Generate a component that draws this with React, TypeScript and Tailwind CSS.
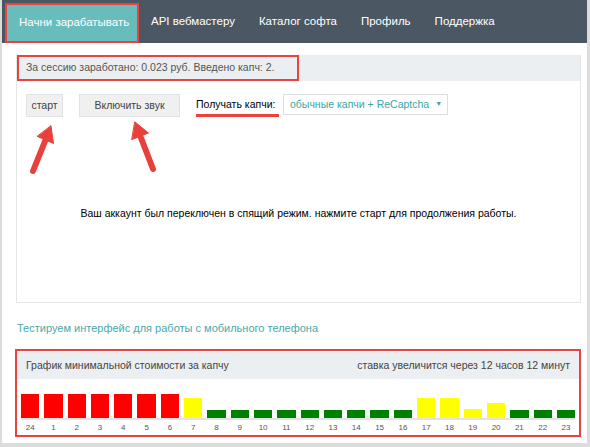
import React from 'react';

const tabs = ['API вебмастеру', 'Каталог софта', 'Профиль', 'Поддержка'];

// hour label, bar colour, bar height
const bars: { h: string; c: string; v: number }[] = [
  { h: '24', c: 'red', v: 24 },
  { h: '1', c: 'red', v: 24 },
  { h: '2', c: 'red', v: 24 },
  { h: '3', c: 'red', v: 24 },
  { h: '4', c: 'red', v: 24 },
  { h: '5', c: 'red', v: 24 },
  { h: '6', c: 'red', v: 24 },
  { h: '7', c: 'yellow', v: 20 },
  { h: '8', c: 'green', v: 8 },
  { h: '9', c: 'green', v: 8 },
  { h: '10', c: 'green', v: 8 },
  { h: '11', c: 'green', v: 8 },
  { h: '12', c: 'green', v: 8 },
  { h: '13', c: 'green', v: 8 },
  { h: '14', c: 'green', v: 8 },
  { h: '15', c: 'green', v: 8 },
  { h: '16', c: 'green', v: 8 },
  { h: '17', c: 'yellow', v: 20 },
  { h: '18', c: 'yellow', v: 20 },
  { h: '19', c: 'yellow', v: 9 },
  { h: '20', c: 'yellow', v: 15 },
  { h: '21', c: 'green', v: 8 },
  { h: '22', c: 'green', v: 8 },
  { h: '23', c: 'green', v: 8 },
];

const barColor: Record<string, string> = {
  red: 'bg-[#ff0000]',
  yellow: 'bg-[#ffff00]',
  green: 'bg-[#008000]',
};

function Arrows() {
  return (
    <svg className="absolute left-0 top-0 pointer-events-none" width="590" height="447" viewBox="0 0 590 447">
      <g stroke="#e8413c" strokeWidth="6" strokeLinecap="round" fill="#e8413c">
        <line x1="31" y1="171" x2="43.5" y2="140" />
        <polygon points="49,126 51.5,143.5 35.5,136.5" strokeWidth="1" strokeLinejoin="round" />
        <line x1="151" y1="169" x2="138.3" y2="136" />
        <polygon points="133,122 146.5,133 130,139.5" strokeWidth="1" strokeLinejoin="round" />
      </g>
    </svg>
  );
}

export default function App() {
  return (
    <div
      className="relative w-[590px] h-[447px] overflow-hidden bg-white border-l-2 border-r-[3px] border-b-4 border-[#dcdcdc] text-[10.5px] whitespace-nowrap"
      style={{ fontFamily: '"Liberation Sans", Arial, sans-serif' }}
    >
      {/* Nav */}
      <div className="h-[43px] bg-[#4b5863] flex items-stretch pl-[3px]">
        <div className="mt-[3px] w-[134px] bg-[#68bcbc] border-2 border-[#e8433f] flex items-center pl-[12px] text-white text-[11.5px]">
          Начни зарабатывать
        </div>
        <div className="flex items-center gap-[24px] pl-[12px] text-white text-[11.5px]">
          {tabs.map((t) => (
            <span key={t}>{t}</span>
          ))}
        </div>
      </div>

      <div className="pl-[14px] pr-[4px]">
        {/* Main box */}
        <div className="mt-[12px] w-[565px] h-[248px] border border-[#e6e6e6] border-t-0 flex flex-col">
          <div className="h-[26px] bg-[#eceff1] flex items-center">
            <div className="h-[26px] w-[282px] border-2 border-[#e8433f] flex items-center pl-[7px] text-[#555]">
              За сессию заработано: 0.023 руб. Введено капч: 2.
            </div>
          </div>

          <div className="flex items-start pl-[9px] pt-[13px]">
            <button className="h-[23px] w-[37px] bg-[#f0f0f0] border border-[#e2e2e2] text-[#444]">старт</button>
            <button className="ml-[16px] h-[23px] w-[101px] bg-[#f0f0f0] border border-[#e2e2e2] text-[#444]">
              Включить звук
            </button>
            <div className="ml-[16px] flex flex-col pt-[4px]">
              <span className="text-black leading-[13px]">Получать капчи:</span>
              <span className="mt-[3px] h-[3px] w-[83px] bg-[#e8433f]" />
            </div>
            <div className="ml-[4px] h-[21px] w-[165px] border border-[#dedede] flex items-center pl-[6px] text-[#3aa6a6]">
              обычные капчи + ReCaptcha
              <span className="ml-[6px] text-[7px]">▼</span>
            </div>
          </div>

          <div className="flex-1 flex items-center justify-center text-black pt-[8px]">
            Ваш аккаунт был переключен в спящий режим. нажмите старт для продолжения работы.
          </div>
        </div>

        {/* Link */}
        <div className="mt-[17px] text-[11px] text-[#4aa9a9] leading-[16px] pl-[1px]">
          Тестируем интерфейс для работы с мобильного телефона
        </div>

        {/* Chart */}
        <div className="mt-[13px] w-[566px] h-[88px] border-2 border-[#e8433f] flex flex-col -ml-[1px]">
          <div className="h-[27px] mt-px bg-[#eceff1] flex items-center justify-between px-[9px] text-[#444]">
            <span>График минимальной стоимости за капчу</span>
            <span>ставка увеличится через 12 часов 12 минут</span>
          </div>
          <div className="flex-1 flex flex-col px-[4px]">
            <div className="flex-1 flex items-end gap-[5px] border-b-2 border-[#e3e3e3]">
              {bars.map((b) => (
                <div key={b.h} className={`flex-1 ${barColor[b.c]}`} style={{ height: b.v }} />
              ))}
            </div>
            <div className="h-[15px] flex gap-[5px]">
              {bars.map((b) => (
                <span key={b.h} className="flex-1 text-center text-[8px] text-[#555] leading-[15px]">
                  {b.h}
                </span>
              ))}
            </div>
          </div>
        </div>
      </div>

      <Arrows />
    </div>
  );
}
